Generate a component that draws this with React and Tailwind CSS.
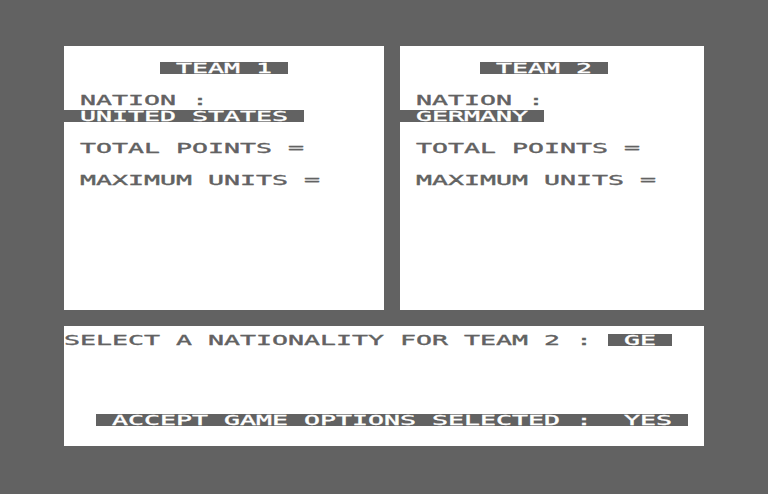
import React from "react";

const FONT = { fontFamily: '"DejaVu Sans Mono", "Liberation Mono", monospace' };

function T({ children, inv = false }) {
  return (
    <span
      className={
        "block w-max whitespace-pre origin-left scale-x-[1.8984] text-[14px] leading-[12px] [-webkit-text-stroke:0.35px_currentcolor] " +
        (inv ? "text-white" : "text-[#626262]")
      }
      style={FONT}
    >
      {children}
    </span>
  );
}

function Bar({ w, children }) {
  return (
    <div className={"h-[12px] bg-[#626262] " + w}>
      <T inv>{children}</T>
    </div>
  );
}

function Line({ children, className = "" }) {
  return (
    <div className={"h-[12px] " + className}>
      <T>{children}</T>
    </div>
  );
}

export default function App() {
  return (
    <div className="w-[768px] h-[494px] bg-[#626262] pt-[46px] pl-[64px] overflow-hidden">
      <div className="flex gap-[16px]">
        <div className="w-[320px] h-[264px] bg-white flex flex-col">
          <div className="mt-[16px] ml-[96px]">
            <Bar w="w-[128px]">{" TEAM 1 "}</Bar>
          </div>
          <Line className="mt-[20px] ml-[16px]">NATION :</Line>
          <div className="mt-[4px]">
            <Bar w="w-[240px]">{" UNITED STATES "}</Bar>
          </div>
          <Line className="mt-[20px] ml-[16px]">TOTAL POINTS =</Line>
          <Line className="mt-[20px] ml-[16px]">MAXIMUM UNITS =</Line>
        </div>
        <div className="w-[304px] h-[264px] bg-white flex flex-col">
          <div className="mt-[16px] ml-[80px]">
            <Bar w="w-[128px]">{" TEAM 2 "}</Bar>
          </div>
          <Line className="mt-[20px] ml-[16px]">NATION :</Line>
          <div className="mt-[4px]">
            <Bar w="w-[144px]">{" GERMANY "}</Bar>
          </div>
          <Line className="mt-[20px] ml-[16px]">TOTAL POINTS =</Line>
          <Line className="mt-[20px] ml-[16px]">MAXIMUM UNITS =</Line>
        </div>
      </div>
      <div className="mt-[16px] w-[640px] h-[120px] bg-white flex flex-col">
        <div className="mt-[8px] flex">
          <div className="w-[544px] h-[12px]">
            <T>{"SELECT A NATIONALITY FOR TEAM 2 : "}</T>
          </div>
          <Bar w="w-[64px]">{" GE "}</Bar>
        </div>
        <div className="mt-[68px] ml-[32px]">
          <Bar w="w-[592px]">{" ACCEPT GAME OPTIONS SELECTED :  YES "}</Bar>
        </div>
      </div>
    </div>
  );
}
